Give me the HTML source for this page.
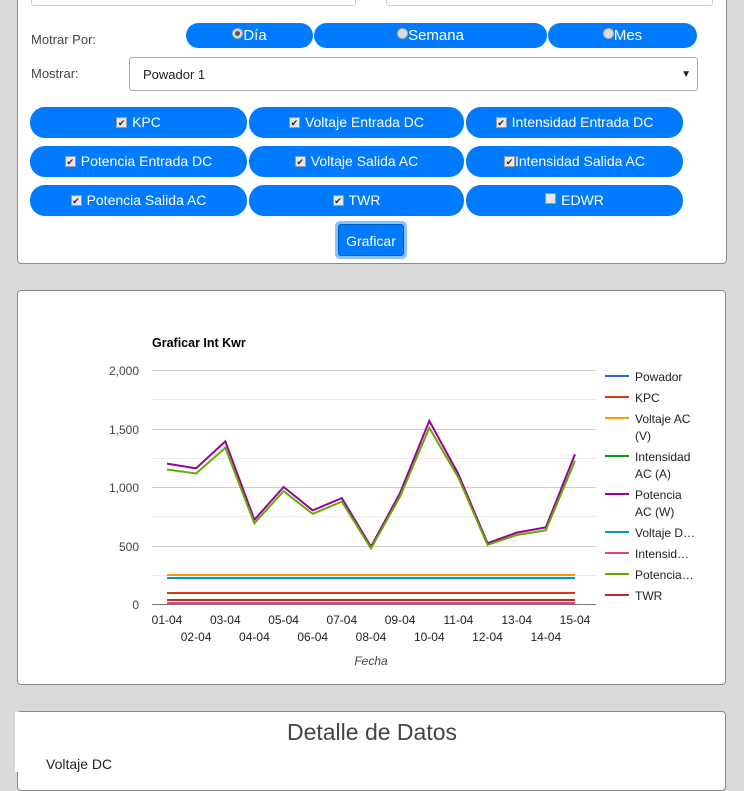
<!DOCTYPE html>
<html><head><meta charset="utf-8"><style>
*{box-sizing:border-box;margin:0;padding:0}
body{width:744px;height:768px;background:#d9d9d9;font-family:"Liberation Sans",Arial,sans-serif;position:relative;overflow:hidden}
.card{position:absolute;background:#fff;border:1px solid #8a8a8a;border-radius:4px}
.ab{position:absolute}
.btn{position:absolute;background:#007bff;color:#fff;border-radius:13px;font-size:14px;text-align:center;white-space:nowrap}
.cb{display:inline-block;width:11px;height:11px;background:#e8e8e8;border:1px solid #999;color:#222;font-size:9px;line-height:10px;text-align:center;vertical-align:1px;margin-right:5px}
.rd{display:inline-block;width:11px;height:11px;border-radius:50%;background:#ddd;border:1px solid #aaa;vertical-align:1px;position:relative}
.rd.on::after{content:"";position:absolute;left:2px;top:2px;width:5px;height:5px;border-radius:50%;background:#555}
.lbl{position:absolute;font-size:13px;color:#444}
</style></head><body>
<div class="card" style="left:17px;top:-10px;width:710px;height:274px"></div>
<div class="ab" style="left:31px;top:-10px;width:325px;height:16px;border:1px solid #ccc;border-radius:3px;background:#fff"></div>
<div class="ab" style="left:386px;top:-10px;width:327px;height:16px;border:1px solid #ccc;border-radius:3px;background:#fff"></div>
<div class="lbl" style="left:31px;top:32px">Motrar Por:</div>
<div class="btn" style="left:186px;top:23px;width:127px;height:25px;line-height:25px;font-size:15px"><span class="rd on"></span>Día</div>
<div class="btn" style="left:314px;top:23px;width:233px;height:25px;line-height:25px;font-size:15px"><span class="rd"></span>Semana</div>
<div class="btn" style="left:548px;top:23px;width:149px;height:25px;line-height:25px;font-size:15px"><span class="rd"></span>Mes</div>
<div class="lbl" style="left:31px;top:66px">Mostrar:</div>
<div class="ab" style="left:129px;top:57px;width:569px;height:34px;border:1px solid #aaa;border-radius:3px;font-size:13px;line-height:34px;padding-left:13px;color:#222">Powador 1<span style="position:absolute;right:6px;font-size:10px">▼</span></div>

<div class="btn" style="left:30px;top:107px;width:217px;height:31px;line-height:31px;border-radius:15px"><span class="cb">✔</span>KPC</div>
<div class="btn" style="left:249px;top:107px;width:215px;height:31px;line-height:31px;border-radius:15px"><span class="cb">✔</span>Voltaje Entrada DC</div>
<div class="btn" style="left:466px;top:107px;width:217px;height:31px;line-height:31px;border-radius:15px"><span class="cb">✔</span>Intensidad Entrada DC</div>
<div class="btn" style="left:30px;top:146px;width:217px;height:31px;line-height:31px;border-radius:15px"><span class="cb">✔</span>Potencia Entrada DC</div>
<div class="btn" style="left:249px;top:146px;width:215px;height:31px;line-height:31px;border-radius:15px"><span class="cb">✔</span>Voltaje Salida AC</div>
<div class="btn" style="left:466px;top:146px;width:217px;height:31px;line-height:31px;border-radius:15px"><span class="cb" style="margin-right:0">✔</span>Intensidad Salida AC</div>
<div class="btn" style="left:30px;top:185px;width:217px;height:31px;line-height:31px;border-radius:15px"><span class="cb">✔</span>Potencia Salida AC</div>
<div class="btn" style="left:249px;top:185px;width:215px;height:31px;line-height:31px;border-radius:15px"><span class="cb">✔</span>TWR</div>
<div class="btn" style="left:466px;top:185px;width:217px;height:31px;line-height:31px;border-radius:15px"><span class="cb"></span>EDWR</div>
<div class="ab" style="left:335px;top:221px;width:72px;height:38px;border-radius:5px;background:#8cc0ff"></div>
<div class="btn" style="left:338px;top:224px;width:66px;height:32px;line-height:32px;border-radius:3px;border:1px solid #0058c0;font-size:14px">Graficar</div>

<div class="card" style="left:17px;top:290px;width:709px;height:395px"></div>
<svg class="ab" style="left:0;top:0" width="744" height="768" font-family="Liberation Sans,Arial,sans-serif">
<text x="152" y="347" font-size="12.5" font-weight="bold" fill="#000">Graficar Int Kwr</text>
<g stroke="#ccc" stroke-width="1">
<line x1="152" y1="370.5" x2="596" y2="370.5"/><line x1="152" y1="429.5" x2="596" y2="429.5"/><line x1="152" y1="487.5" x2="596" y2="487.5"/><line x1="152" y1="546.5" x2="596" y2="546.5"/>
</g>
<g stroke="#ebebeb" stroke-width="1">
<line x1="152" y1="399.5" x2="596" y2="399.5"/><line x1="152" y1="458.5" x2="596" y2="458.5"/><line x1="152" y1="516.5" x2="596" y2="516.5"/><line x1="152" y1="575.5" x2="596" y2="575.5"/>
</g>
<g font-size="12" fill="#444" text-anchor="end">
<text x="139" y="375">2,000</text><text x="139" y="434">1,500</text><text x="139" y="492">1,000</text><text x="139" y="551">500</text><text x="139" y="609">0</text>
</g>
<g fill="none" stroke-width="2">
<line x1="167" y1="575" x2="575" y2="575" stroke="#ff9900"/>
<line x1="167" y1="578" x2="575" y2="578" stroke="#0099c6"/>
<line x1="167" y1="593" x2="575" y2="593" stroke="#dc3912"/>
<line x1="167" y1="600" x2="575" y2="600" stroke="#b82e2e"/>
<line x1="167" y1="603" x2="575" y2="603" stroke="#dd4477"/>
<polyline stroke="#990099" points="167,463.6 196.1,468.3 225.3,441.4 254.4,519.8 283.6,487 312.7,510.4 341.8,498.1 371,546.7 400.1,492.9 429.3,420.9 458.4,474.1 487.5,543.2 516.7,532.6 545.8,527.4 575,454.2"/>
<polyline stroke="#66aa00" points="167,469.5 196.1,473.5 225.3,447.8 254.4,523.3 283.6,491.1 312.7,513.9 341.8,501.6 371,548.4 400.1,496.4 429.3,427.9 458.4,477.6 487.5,544.9 516.7,535 545.8,530.3 575,460.7"/>
</g>
<line x1="152" y1="604.5" x2="596" y2="604.5" stroke="#777" stroke-width="1"/>
<g font-size="12" fill="#222" text-anchor="middle">
<text x="167" y="624">01-04</text><text x="225.3" y="624">03-04</text><text x="283.6" y="624">05-04</text><text x="341.8" y="624">07-04</text><text x="400.1" y="624">09-04</text><text x="458.4" y="624">11-04</text><text x="516.7" y="624">13-04</text><text x="575" y="624">15-04</text>
<text x="196.1" y="641">02-04</text><text x="254.4" y="641">04-04</text><text x="312.7" y="641">06-04</text><text x="371" y="641">08-04</text><text x="429.3" y="641">10-04</text><text x="487.5" y="641">12-04</text><text x="545.8" y="641">14-04</text>
<text x="371" y="665" font-style="italic" fill="#444">Fecha</text>
</g>
<g stroke-width="2">
<line x1="605" y1="376" x2="629" y2="376" stroke="#3366cc"/>
<line x1="605" y1="397" x2="629" y2="397" stroke="#dc3912"/>
<line x1="605" y1="418" x2="629" y2="418" stroke="#ff9900"/>
<line x1="605" y1="456" x2="629" y2="456" stroke="#109618"/>
<line x1="605" y1="494" x2="629" y2="494" stroke="#990099"/>
<line x1="605" y1="532" x2="629" y2="532" stroke="#0099c6"/>
<line x1="605" y1="553" x2="629" y2="553" stroke="#dd4477"/>
<line x1="605" y1="574" x2="629" y2="574" stroke="#66aa00"/>
<line x1="605" y1="595" x2="629" y2="595" stroke="#b82e2e"/>
</g>
<g font-size="12" fill="#222">
<text x="635" y="381">Powador</text><text x="635" y="402">KPC</text>
<text x="635" y="423">Voltaje AC</text><text x="635" y="440">(V)</text>
<text x="635" y="461">Intensidad</text><text x="635" y="478">AC (A)</text>
<text x="635" y="499">Potencia</text><text x="635" y="516">AC (W)</text>
<text x="635" y="537">Voltaje D…</text><text x="635" y="558">Intensid…</text><text x="635" y="579">Potencia…</text><text x="635" y="600">TWR</text>
</g>
</svg>

<div class="card" style="left:17px;top:711px;width:709px;height:80px"></div>
<div class="ab" style="left:15px;top:712px;width:6px;height:60px;background:#fff"></div>
<div class="ab" style="left:0;top:719px;width:744px;text-align:center;font-size:23px;color:#444">Detalle de Datos</div>
<div class="ab" style="left:46px;top:756px;font-size:14px;color:#222">Voltaje DC</div>
</body></html>
